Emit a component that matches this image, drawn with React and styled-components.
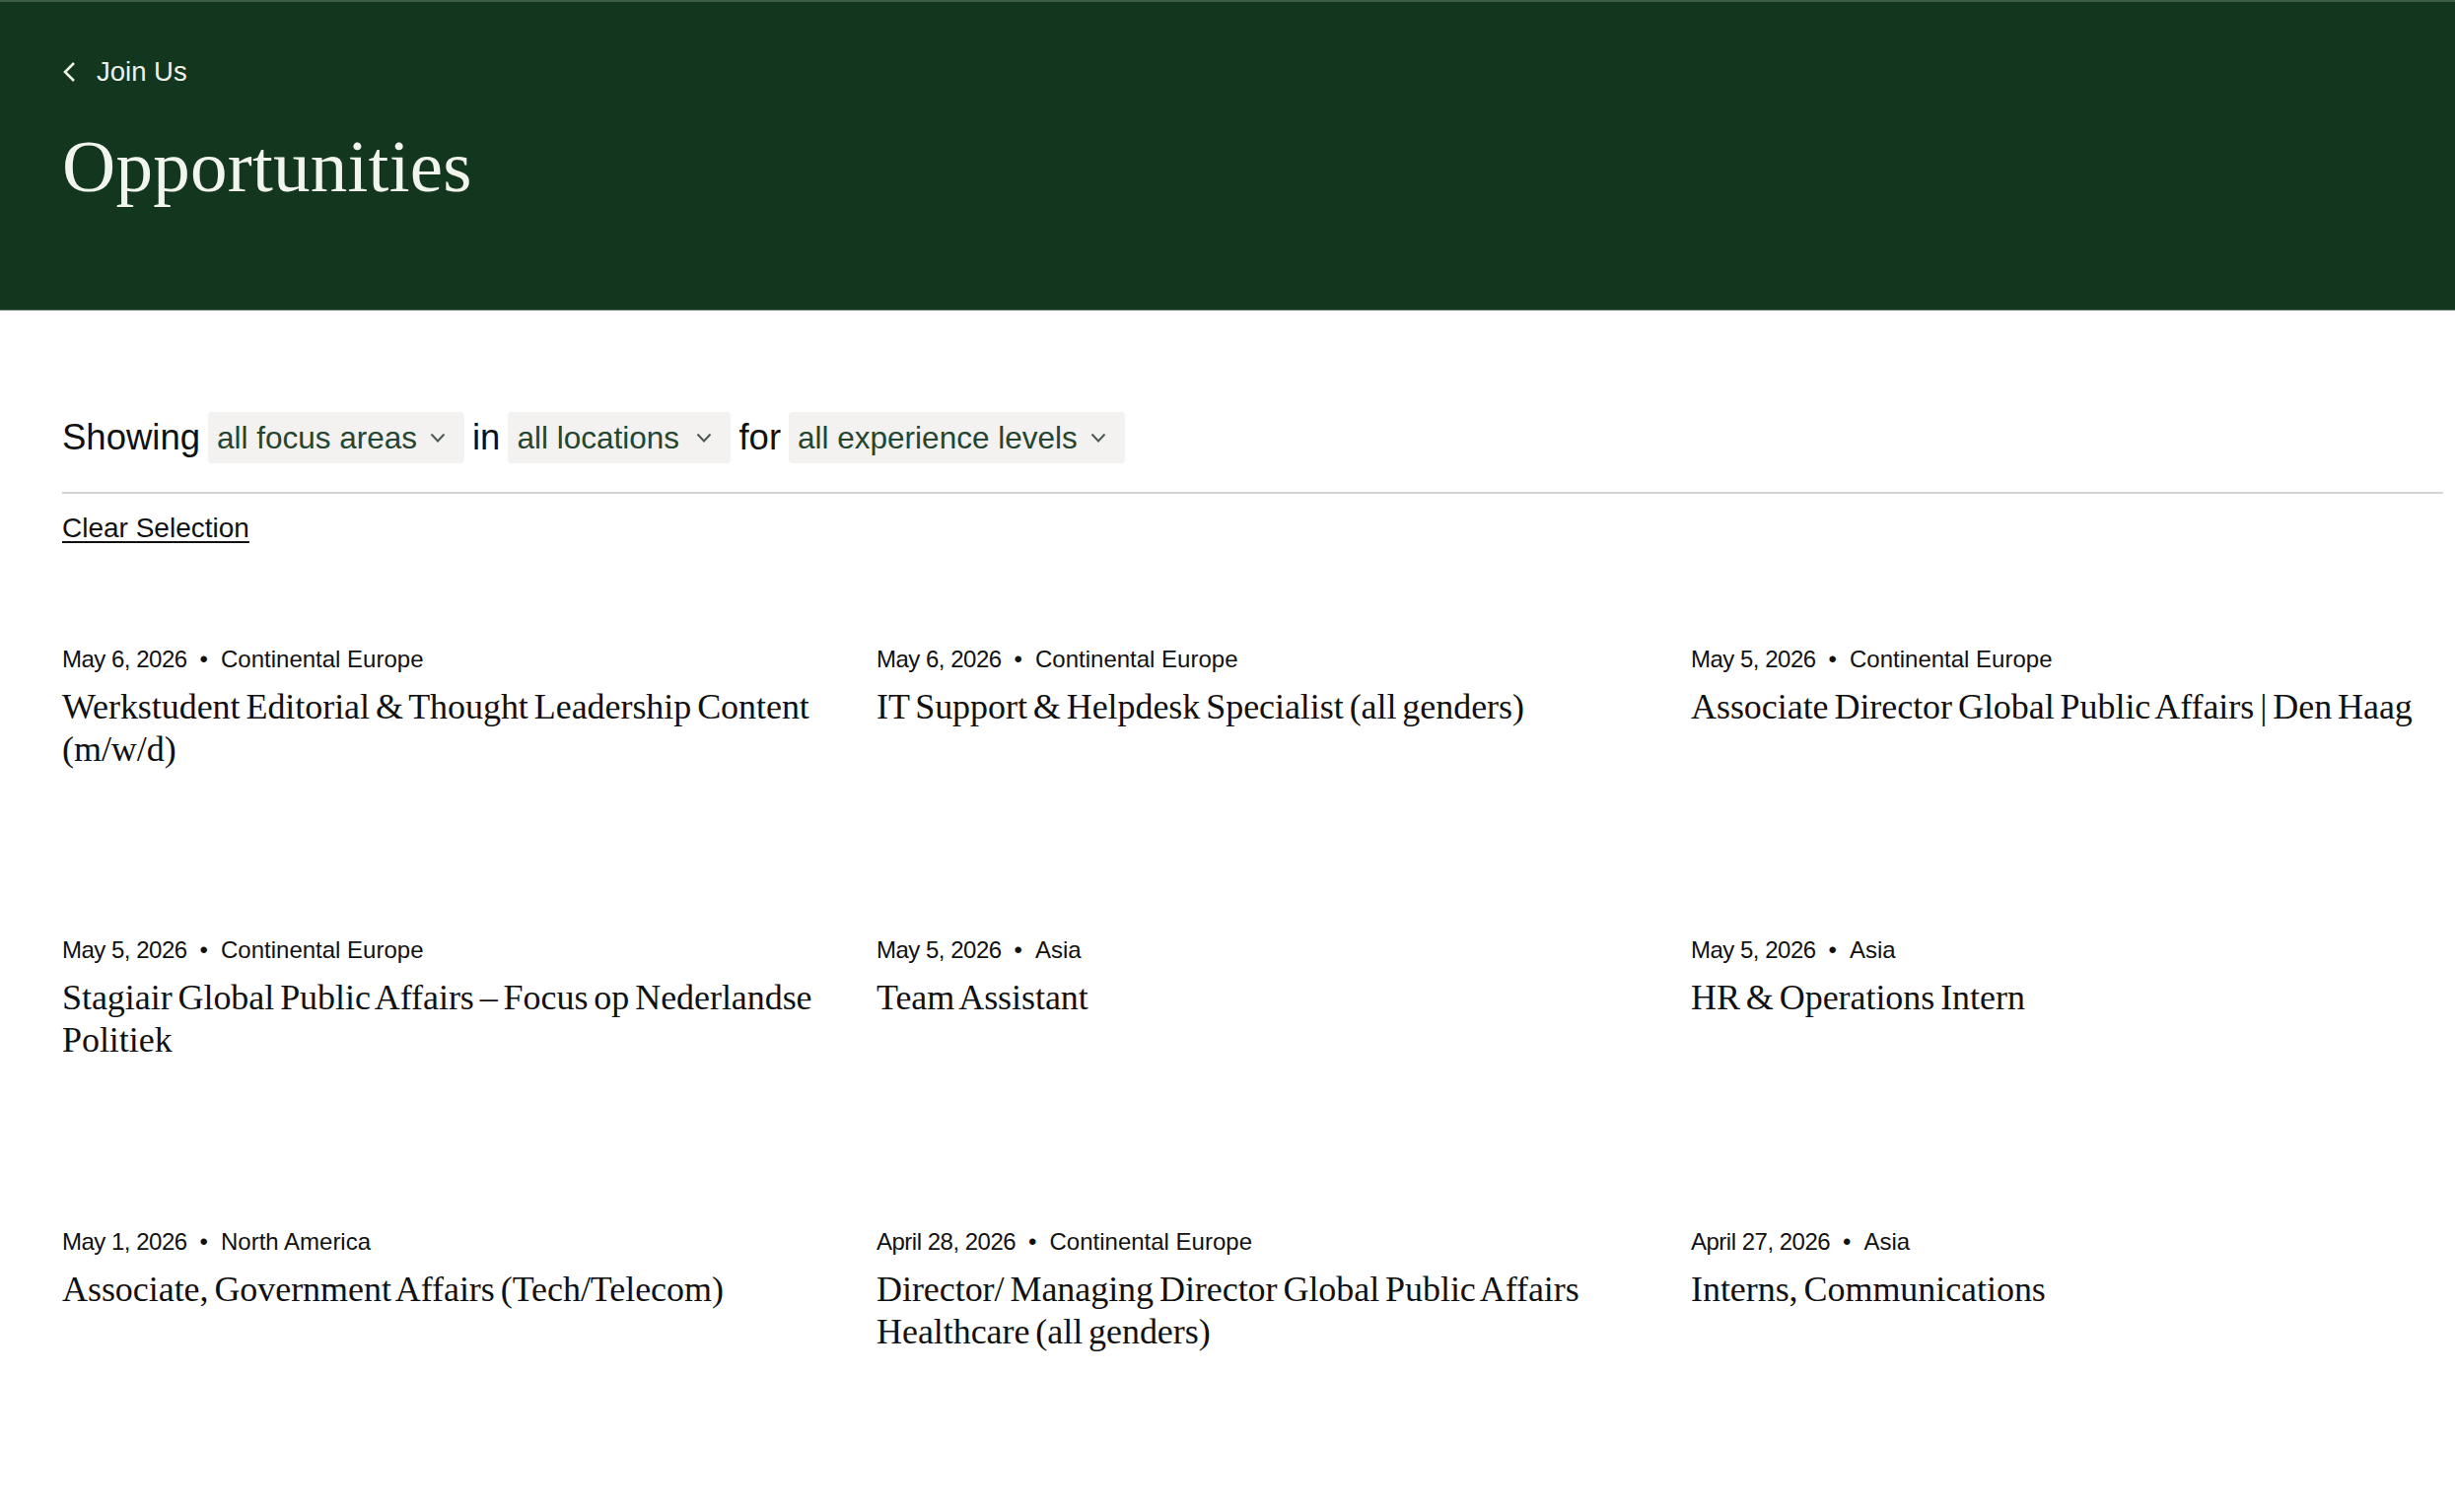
import React from 'react';
import styled, { createGlobalStyle } from 'styled-components';

const GlobalStyle = createGlobalStyle`
  html, body {
    margin: 0;
    padding: 0;
    background: #fff;
  }
  body {
    font-family: "Liberation Sans", Arial, sans-serif;
    color: #111;
  }
`;

const Hero = styled.header`
  height: 315px;
  box-sizing: border-box;
  background: #12371e;
  border-top: 2px solid #3d5c46;
  border-bottom: 1px solid #4f6d58;
  padding: 53px 63px 0;
`;

const BackLink = styled.a`
  display: flex;
  align-items: center;
  gap: 21px;
  height: 36px;
  font-size: 27.5px;
  color: #eef1ea;
`;

const Title = styled.h1`
  margin: 36px 0 0;
  font-family: "Liberation Serif", Georgia, serif;
  font-weight: 400;
  font-size: 75px;
  line-height: 84px;
  letter-spacing: 0.25px;
  color: #f2f4ee;
`;

const Content = styled.main`
  padding: 103px 12px 0 63px;
`;

const FilterRow = styled.div`
  display: flex;
  align-items: center;
  gap: 8px;
  height: 52px;
  font-size: 36.5px;
  color: #111;
`;

const Chip = styled.button`
  display: flex;
  align-items: center;
  justify-content: space-between;
  box-sizing: border-box;
  width: ${(p) => p.$width}px;
  height: 52px;
  padding: 0 19px 0 9px;
  border: 0;
  border-radius: 4px;
  background: #f3f2f0;
  font-family: inherit;
  font-size: 31.5px;
  color: #24452f;
`;

const Rule = styled.hr`
  margin: 29px 0 0;
  border: 0;
  border-top: 2px solid #d4d4d4;
`;

const ClearLink = styled.a`
  display: inline-block;
  margin-top: 18px;
  font-size: 28px;
  line-height: 34px;
  color: #111;
  text-decoration: underline;
  text-underline-offset: 4px;
`;

const JobGrid = styled.section`
  display: grid;
  grid-template-columns: repeat(3, 762px);
  column-gap: 64px;
  grid-auto-rows: 295.4px;
  margin-top: 100px;
`;

const Job = styled.article`
  display: flex;
  flex-direction: column;
`;

const Meta = styled.div`
  display: flex;
  align-items: center;
  gap: 13px;
  height: 32px;
  font-size: 24px;
  color: #111;
`;

const MetaDate = styled.span`
  letter-spacing: -0.5px;
`;

const JobTitle = styled.h3`
  margin: 11px 0 0;
  font-family: "Liberation Serif", Georgia, serif;
  font-weight: 400;
  font-size: 36px;
  line-height: 43px;
  letter-spacing: -0.05px;
  word-spacing: -3px;
  color: #111;
`;

const ChevronDown = () => (
  <svg width="16" height="11" viewBox="0 0 16 11" fill="none" stroke="#4b5a50" strokeWidth="2">
    <polyline points="1.5,1.5 8,8.5 14.5,1.5" />
  </svg>
);

const ChevronBack = () => (
  <svg width="14" height="22" viewBox="0 0 14 22" fill="none" stroke="#eef1ea" strokeWidth="2.6">
    <polyline points="12,2 3,11 12,20" />
  </svg>
);

const jobs = [
  ['May 6, 2026', 'Continental Europe', 'Werkstudent Editorial & Thought Leadership Content (m/w/d)'],
  ['May 6, 2026', 'Continental Europe', 'IT Support & Helpdesk Specialist (all genders)'],
  ['May 5, 2026', 'Continental Europe', 'Associate Director Global Public Affairs | Den Haag'],
  ['May 5, 2026', 'Continental Europe', 'Stagiair Global Public Affairs – Focus op Nederlandse Politiek'],
  ['May 5, 2026', 'Asia', 'Team Assistant'],
  ['May 5, 2026', 'Asia', 'HR & Operations Intern'],
  ['May 1, 2026', 'North America', 'Associate, Government Affairs (Tech/Telecom)'],
  ['April 28, 2026', 'Continental Europe', 'Director/ Managing Director Global Public Affairs Healthcare (all genders)'],
  ['April 27, 2026', 'Asia', 'Interns, Communications'],
];

const App = () => (
  <>
    <GlobalStyle />
    <Hero>
      <BackLink>
        <ChevronBack />
        Join Us
      </BackLink>
      <Title>Opportunities</Title>
    </Hero>
    <Content>
      <FilterRow>
        Showing
        <Chip $width={260}>all focus areas <ChevronDown /></Chip>
        in
        <Chip $width={226}>all locations <ChevronDown /></Chip>
        for
        <Chip $width={341}>all experience levels <ChevronDown /></Chip>
      </FilterRow>
      <Rule />
      <ClearLink>Clear Selection</ClearLink>
      <JobGrid>
        {jobs.map(([date, region, title]) => (
          <Job key={title}>
            <Meta>
              <MetaDate>{date}</MetaDate>
              <span>•</span>
              <span>{region}</span>
            </Meta>
            <JobTitle>{title}</JobTitle>
          </Job>
        ))}
      </JobGrid>
    </Content>
  </>
);

export default App;
